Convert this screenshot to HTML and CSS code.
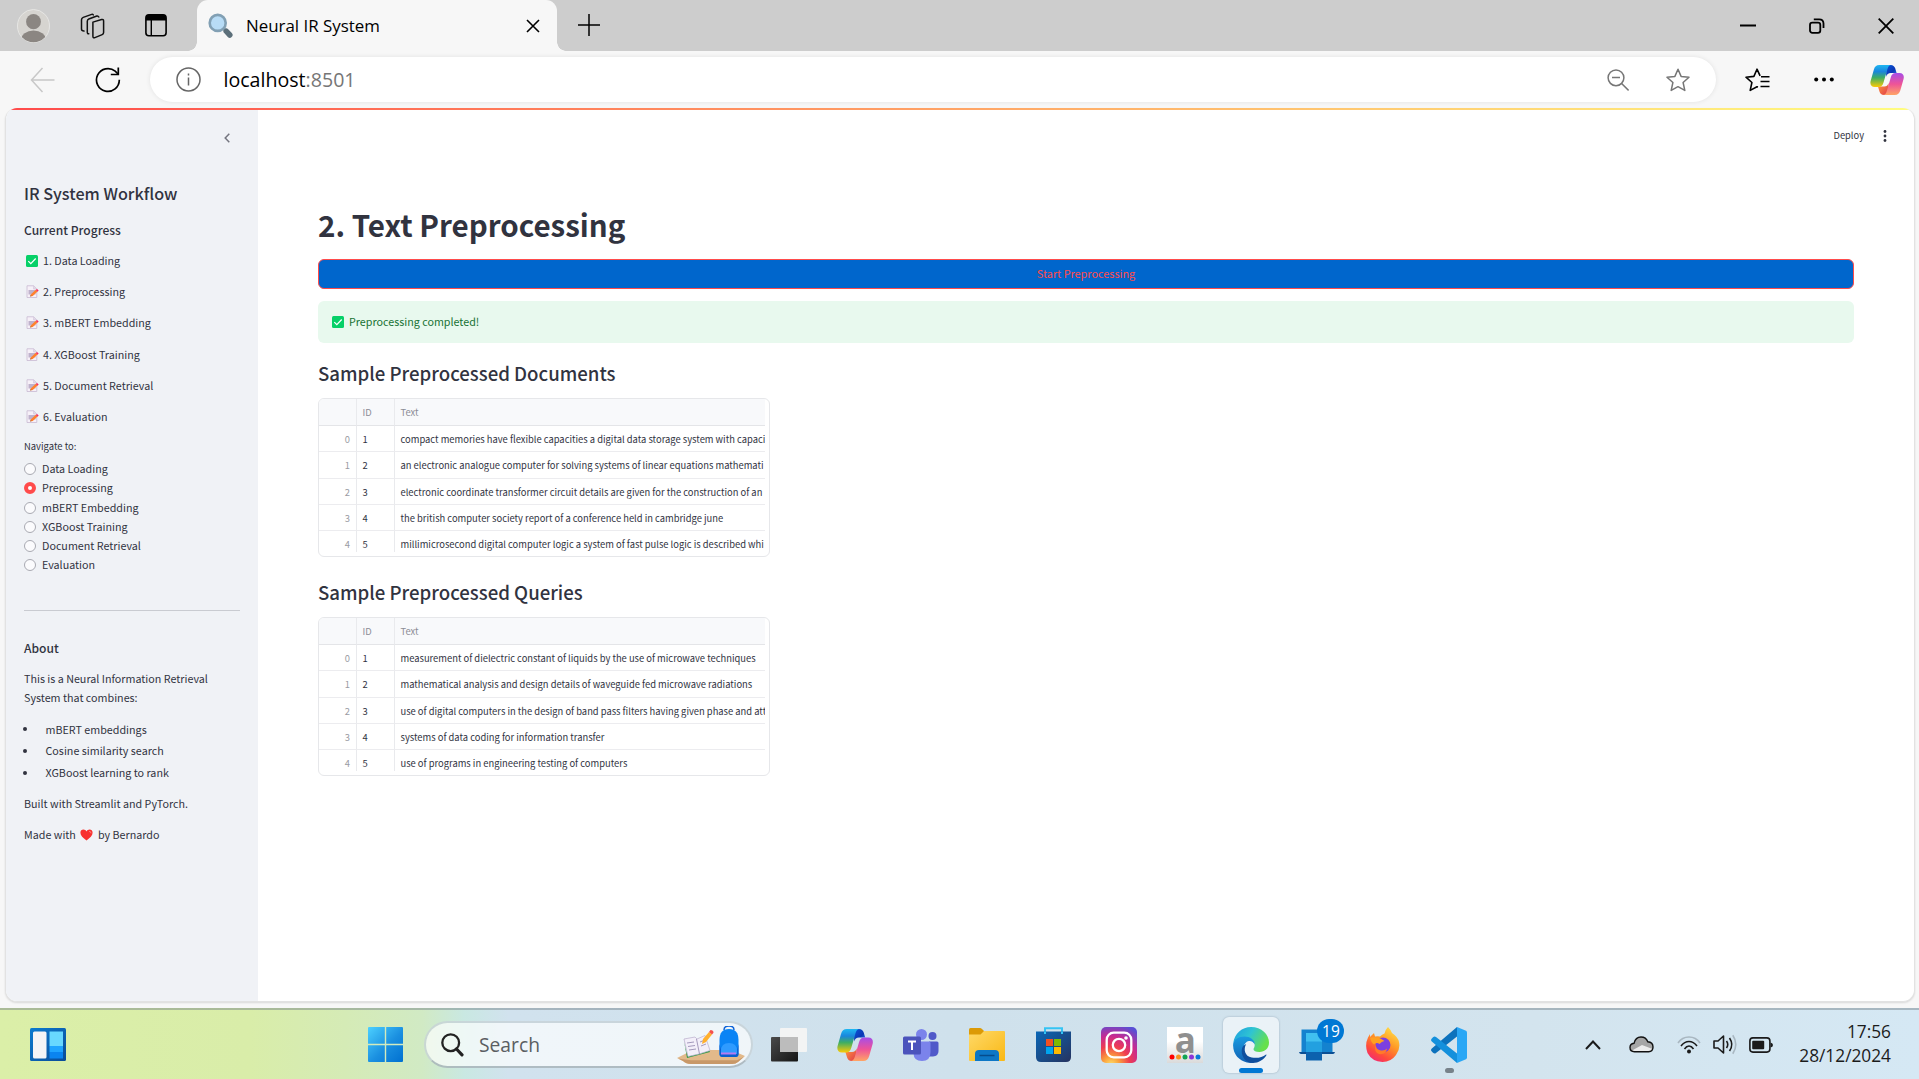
FILE: index.html
```html
<!DOCTYPE html>
<html lang="en">
<head>
<meta charset="utf-8">
<title>Neural IR System</title>
<link rel="stylesheet" href="styles.css">
</head>
<body>
<svg width="0" height="0" class="defs" aria-hidden="true">
  <defs>
    <linearGradient id="cpA" x1="0" y1="0" x2="0" y2="1"><stop offset="0" stop-color="#1eb7f2"/><stop offset=".3" stop-color="#1a86dc"/><stop offset=".58" stop-color="#3fae62"/><stop offset="1" stop-color="#fdca05"/></linearGradient>
    <linearGradient id="cpB" x1="0" y1="0" x2="0" y2="1"><stop offset="0" stop-color="#a64de8"/><stop offset=".5" stop-color="#ee5398"/><stop offset="1" stop-color="#ffa564"/></linearGradient>
    <linearGradient id="cpC" x1="0" y1="0" x2="1" y2="1"><stop offset="0" stop-color="#0a55d8"/><stop offset=".6" stop-color="#0b37b5"/><stop offset="1" stop-color="#2f7ff0"/></linearGradient>
    <linearGradient id="cpD" x1="0" y1="0" x2="1" y2="1"><stop offset="0" stop-color="#ff9a3c"/><stop offset="1" stop-color="#e0394b"/></linearGradient>
    <linearGradient id="win" x1="0" y1="0" x2="1" y2="1"><stop offset="0" stop-color="#4cd0ff"/><stop offset=".55" stop-color="#1a8fe0"/><stop offset="1" stop-color="#0070d0"/></linearGradient>
    <linearGradient id="fold" x1="0" y1="0" x2="1" y2="1"><stop offset="0" stop-color="#ffd968"/><stop offset="1" stop-color="#f9b815"/></linearGradient>
    <linearGradient id="store" x1="0" y1="0" x2="1" y2="1"><stop offset="0" stop-color="#0a66b6"/><stop offset="1" stop-color="#26335f"/></linearGradient>
    <radialGradient id="insta" cx=".28" cy="1.05" r="1.15"><stop offset="0" stop-color="#fddf6a"/><stop offset=".2" stop-color="#fba03c"/><stop offset=".45" stop-color="#ef3d50"/><stop offset=".7" stop-color="#c72a92"/><stop offset="1" stop-color="#5a4fd4"/></radialGradient>
    <linearGradient id="edgeA" x1="0" y1="0" x2="1" y2=".45"><stop offset="0" stop-color="#1b9de2"/><stop offset=".5" stop-color="#2fc4d2"/><stop offset="1" stop-color="#66e04c"/></linearGradient>
    <linearGradient id="edgeB" x1="0" y1="0" x2="0" y2="1"><stop offset="0" stop-color="#1a9be0"/><stop offset="1" stop-color="#1261b4"/></linearGradient>
    <linearGradient id="ffx" x1=".8" y1="0" x2=".2" y2="1"><stop offset="0" stop-color="#ffe14a"/><stop offset=".4" stop-color="#ff9a26"/><stop offset=".75" stop-color="#ff4a3c"/><stop offset="1" stop-color="#f0267a"/></linearGradient>
    <linearGradient id="tv" x1="0" y1="0" x2="1" y2="1"><stop offset="0" stop-color="#4a4a4a"/><stop offset="1" stop-color="#151515"/></linearGradient>
    <linearGradient id="wdg" x1="0" y1="0" x2="1" y2="1"><stop offset="0" stop-color="#0b7bd0"/><stop offset="1" stop-color="#0a4c98"/></linearGradient>
    <symbol id="copilot" viewBox="0 0 36 34">
      <path fill="url(#cpC)" d="M17 1h5c2.500 0 3.900 1.300 4.700 3.600L28.200 9.500H22c-2.600 0-4 1.200-4.900 4z"/>
      <path fill="url(#cpD)" d="M19.500 33h-4.800c-2.600 0-4-1.300-4.700-3.700L8.400 24H15c2.600 0 3.800-1.200 4.700-3.800z"/>
      <path fill="url(#cpA)" d="M9.800 1h13c-2.400.1-3.500 1.500-4.300 4.200l-4.200 14.500c-.9 3-2.200 4.800-5.300 4.800H5C1.200 24.500-.3 21.800.6 18L4 6C5 2.600 6.600 1 9.800 1z"/>
      <path fill="url(#cpB)" d="M26.300 33H13.500c2.400-.1 3.500-1.500 4.300-4.200L22 14.300c.9-3 2.200-4.800 5.300-4.800h4c3.800 0 5.200 2.700 4.300 6.500l-3.400 12c-1 3.400-2.700 5-5.900 5z"/>
    </symbol>
    <symbol id="check" viewBox="0 0 12 12"><rect width="12" height="12" rx="1.500" fill="#06d068"/><path d="M2.300 6.200 4.800 8.700 9.700 3.500" fill="none" stroke="#fff" stroke-width="1.200"/></symbol>
    <symbol id="memo" viewBox="0 0 13 13"><path d="M1 .8h6.800l3 3v8.700H1z" fill="#f6f0f8" stroke="#cdbfd6" stroke-width=".9"/><path d="M7.600.8v3.200h3.200" fill="#e4dcea" stroke="#cdbfd6" stroke-width=".6"/><path d="M2.500 5h7v4.500h-7z" fill="#bfb2cc"/><path d="m4.200 11.600.8-2.400 4.800-4.400 1.700 1.800-4.700 4.300z" fill="#ff822d"/><path d="m9.800 4.900 1.200-1 1.700 1.700-1.200 1.100z" fill="#f92f60"/><path d="m4.200 11.600.5-1.500.9 1z" fill="#7a4a35"/></symbol>
  </defs>
</svg>

<header class="tabs">
  <svg class="avatar" width="33" height="34" viewBox="0 0 33 34"><defs><clipPath id="av"><ellipse cx="16.500" cy="17" rx="15.800" ry="16.300"/></clipPath></defs><ellipse cx="16.500" cy="17" rx="16" ry="16.500" fill="#d6d4d0" stroke="#e6e6e4"/><g clip-path="url(#av)" fill="#8b8682"><ellipse cx="16.500" cy="12.700" rx="7.400" ry="7.600"/><ellipse cx="16.500" cy="31" rx="12.500" ry="9.500"/></g></svg>
  <svg class="spaces" width="26" height="26" viewBox="0 0 26 26" fill="none" stroke="#111" stroke-width="1.500" stroke-linejoin="round" stroke-linecap="round"><path d="m13.500 8.300 8.700-2.600q2-.5 2 1.500v11.600q0 1.500-1.400 2l-7.300 3q-2 .7-2-1.400z" transform="translate(-.6 .8)"/><path d="M9 19.800q-1.500.2-1.500-1.800V7.300q0-1.700 1.500-2.300l8-3q1.300-.4 2 1" transform="translate(-.2 1)"/><path d="M4.500 17.600Q2 17.500 2 15.500V6.300q0-1.800 1.700-2.400l8.500-3q1-.3 1.600.5" transform="translate(-.5 .5)"/></svg>
  <svg class="vtabs" width="22" height="23" viewBox="0 0 22 23"><rect x=".9" y=".9" width="20.200" height="20.800" rx="3" fill="none" stroke="#000" stroke-width="1.600"/><path d="M.9 6.500V4q0-3 3-3h14.200q3 0 3 3v2.500z"/><path d="M6.300 6v16" stroke="#000" stroke-width="1.400"/></svg>
  <div class="tab">
    <svg class="glass" width="25" height="25" viewBox="0 0 25 25"><path d="m14.500 14.500 3 3" stroke="#8a979f" stroke-width="3"/><path d="m18.200 18.200 3.600 3.800" stroke="#5c6f7a" stroke-width="5.500" stroke-linecap="round"/><circle cx="9.700" cy="9.900" r="8" fill="#b8dcf6" stroke="#82a0b4" stroke-width="2.600"/></svg>
    <span class="tab-title">Neural IR System</span>
    <svg width="14" height="14" viewBox="0 0 14 14" stroke="#000" stroke-width="1.600"><path d="m1 1 12 12M13 1 1 13"/></svg>
  </div>
  <svg class="plus" width="22" height="22" viewBox="0 0 22 22" stroke="#000" stroke-width="1.500"><path d="M11 0v22M0 11h22"/></svg>
  <div class="winctl">
    <svg width="16" height="16" viewBox="0 0 16 16"><path d="M0 7.500h16" stroke="#000" stroke-width="2"/></svg>
    <svg width="16" height="16" viewBox="0 0 16 16" fill="none" stroke="#000" stroke-width="1.800"><rect x="1" y="4.600" width="10.300" height="10.300" rx="2.300"/><path d="M4.800 1.300h5.400q4.300 0 4.300 4.300V10"/></svg>
    <svg width="16" height="16" viewBox="0 0 16 16" stroke="#000" stroke-width="1.800"><path d="m.7.7 14.600 14.600M15.300.7.700 15.300"/></svg>
  </div>
</header>

<div class="toolbar">
  <svg class="back" width="25" height="26" viewBox="0 0 25 26" fill="none" stroke="#c8c8c8" stroke-width="1.500"><path d="M24.500 13H1.500M12.500 1 1.500 13l11 12"/></svg>
  <svg class="reload" width="26" height="26" viewBox="0 0 26 26" fill="none" stroke="#000" stroke-width="1.700"><path d="M24.300 12.800A11.400 11.400 0 1 1 20.200 4.200L23 7"/><path d="M23.300.5v7h-7.500"/></svg>
  <div class="address">
    <svg width="25" height="25" viewBox="0 0 25 25" fill="none" stroke="#666" stroke-width="1.500"><circle cx="12.500" cy="12.500" r="11.500"/><path d="M12.500 10.500v8M12.500 6.500v2"/></svg>
    <span class="url">localhost<span class="port">:8501</span></span>
    <svg class="zoomout" width="22" height="22" viewBox="0 0 22 22" fill="none" stroke="#767676" stroke-width="1.500"><circle cx="9" cy="8.800" r="7.900"/><path d="m14.600 14.500 7 7M5 8.600h8"/></svg>
    <svg class="star" width="24" height="24" viewBox="0 0 24 24" fill="none" stroke="#767676" stroke-width="1.500" stroke-linejoin="round"><path d="m12 1.200 3.100 7.200 7.900.8-5.900 5.300 1.700 7.900L12 18.700l-6.800 3.700 1.700-7.900L1 9.200l7.900-.8z"/></svg>
  </div>
  <svg class="favs" width="25" height="24" viewBox="0 0 25 24" fill="none" stroke="#000" stroke-width="1.600" stroke-linejoin="round"><path d="M13 19 12 18.700l-6.800 3.700 1.700-7.900L1 9.200l7.900-.8L12 1.200l3.100 6.600M16 8.700h8.500M15.500 13.500h9M15.500 18.500h9"/></svg>
  <svg class="more" width="20" height="5" viewBox="0 0 20 5"><circle cx="2.200" cy="2.500" r="2"/><circle cx="10" cy="2.500" r="2"/><circle cx="17.800" cy="2.500" r="2"/></svg>
  <svg class="pilot" width="34" height="32"><use href="#copilot"/></svg>
</div>

<div class="window">
<div class="page">
  <div class="rainbow"></div>
  <div class="app">
    <aside class="sidebar">
      <div class="collapse"><svg width="6" height="10" viewBox="0 0 6 10" fill="none" stroke="#74757f" stroke-width="1.500"><path d="M5.300.8 1.200 5l4.100 4.200"/></svg></div>
      <h2>IR System Workflow</h2>
      <h3>Current Progress</h3>
      <ul class="steps">
        <li><svg class="done" width="12" height="12"><use href="#check"/></svg>1. Data Loading</li>
        <li><svg width="13" height="13"><use href="#memo"/></svg>2. Preprocessing</li>
        <li><svg width="13" height="13"><use href="#memo"/></svg>3. mBERT Embedding</li>
        <li><svg width="13" height="13"><use href="#memo"/></svg>4. XGBoost Training</li>
        <li><svg width="13" height="13"><use href="#memo"/></svg>5. Document Retrieval</li>
        <li><svg width="13" height="13"><use href="#memo"/></svg>6. Evaluation</li>
      </ul>
      <div class="navlabel">Navigate to:</div>
      <ul class="radios">
        <li><i></i>Data Loading</li>
        <li><i class="on"></i>Preprocessing</li>
        <li><i></i>mBERT Embedding</li>
        <li><i></i>XGBoost Training</li>
        <li><i></i>Document Retrieval</li>
        <li><i></i>Evaluation</li>
      </ul>
      <hr>
      <h3 class="about">About</h3>
      <p class="intro">This is a Neural Information Retrieval<br>System that combines:</p>
      <ul class="bullets">
        <li>mBERT embeddings</li>
        <li>Cosine similarity search</li>
        <li>XGBoost learning to rank</li>
      </ul>
      <p class="built">Built with Streamlit and PyTorch.</p>
      <p class="made">Made with <svg width="13" height="12" viewBox="0 0 13 12"><path d="M6.500 11.500C3 8.800.4 6.500.4 3.700.4 1.800 1.800.6 3.400.6c1.300 0 2.400.7 3.100 1.800C7.200 1.300 8.300.6 9.600.6c1.600 0 3 1.200 3 3.100 0 2.800-2.600 5.100-6.100 7.800z" fill="#f8312f"/><path d="M9 2.500q2-.4 2 1.800" stroke="#fb7e7c" fill="none"/></svg> by Bernardo</p>
    </aside>
    <main class="main">
      <div class="apphead"><span>Deploy</span><svg width="4" height="12" viewBox="0 0 4 12" fill="#31333f"><circle cx="2" cy="1.500" r="1.400"/><circle cx="2" cy="6" r="1.400"/><circle cx="2" cy="10.500" r="1.400"/></svg></div>
      <h1>2. Text Preprocessing</h1>
      <button class="start">Start Preprocessing</button>
      <div class="alert"><svg width="12" height="12"><use href="#check"/></svg>Preprocessing completed!</div>
      <h2>Sample Preprocessed Documents</h2>
      <div class="frame"><div class="grid">
        <div class="row head"><span></span><span>ID</span><span>Text</span></div>
        <div class="row"><span>0</span><span>1</span><span>compact memories have flexible capacities a digital data storage system with capaci</span></div>
        <div class="row"><span>1</span><span>2</span><span>an electronic analogue computer for solving systems of linear equations mathemati</span></div>
        <div class="row"><span>2</span><span>3</span><span>electronic coordinate transformer circuit details are given for the construction of an</span></div>
        <div class="row"><span>3</span><span>4</span><span>the british computer society report of a conference held in cambridge june</span></div>
        <div class="row"><span>4</span><span>5</span><span>millimicrosecond digital computer logic a system of fast pulse logic is described whi</span></div>
      </div></div>
      <h2 class="second">Sample Preprocessed Queries</h2>
      <div class="frame"><div class="grid">
        <div class="row head"><span></span><span>ID</span><span>Text</span></div>
        <div class="row"><span>0</span><span>1</span><span>measurement of dielectric constant of liquids by the use of microwave techniques</span></div>
        <div class="row"><span>1</span><span>2</span><span>mathematical analysis and design details of waveguide fed microwave radiations</span></div>
        <div class="row"><span>2</span><span>3</span><span>use of digital computers in the design of band pass filters having given phase and att</span></div>
        <div class="row"><span>3</span><span>4</span><span>systems of data coding for information transfer</span></div>
        <div class="row"><span>4</span><span>5</span><span>use of programs in engineering testing of computers</span></div>
      </div></div>
    </main>
  </div>
</div>
</div>

<footer class="taskbar">
  <svg class="widgets" width="36" height="33" viewBox="0 0 36 33"><rect width="36" height="33" rx="1.500" fill="url(#wdg)"/><rect x="3" y="3.500" width="13.500" height="27" rx="1.500" fill="#f4f4f6"/><path d="M19.500 3.500H33V18H19.500z" fill="#68d8ff"/><path d="M19.500 18H33v6H19.500z" fill="#1fa4ff"/><path d="M19.500 24H33v6.500H19.500z" fill="#0a84f0"/></svg>
  <svg class="startbtn" width="35" height="35" viewBox="0 0 35 35"><path d="M1 0h15.800v16.800H0V1q0-1 1-1zM18.200 0H34q1 0 1 1v15.800H18.200zM0 18.200h16.800V35H1q-1 0-1-1zM18.200 18.200H35V34q0 1-1 1H18.200z" fill="url(#win)"/></svg>
  <div class="search">
    <svg width="23" height="24" viewBox="0 0 23 24" fill="none" stroke="#222" stroke-width="2.300"><circle cx="9.700" cy="9.700" r="8.400"/><path d="m15.500 16 5.500 5.800" stroke-width="3.200" stroke-linecap="round"/></svg>
    <span>Search</span>
    <svg class="art" width="68" height="38" viewBox="0 0 68 38"><path d="M0 32 16 24h38l14 6-7 6q-2 2-6 2H14q-5 0-8-3z" fill="#e2b98a"/><path d="m1 32.500 13 1.800h46l7-3.500-6 5.200q-2 2-6 2H14q-5 0-8-3z" fill="#c89868"/><path d="m7 15 3 17 23-6-1.500-3L10 28z" fill="#2e9b45"/><path d="m7 13 11-2 2 2 8-3.500 5 15-11 3.500-11 2.500z" fill="#f3effa" stroke="#b9aecb" stroke-width=".7"/><path d="m19.500 13 3 15M10 17l7-1M11 20.500l7-1M12 24l7-1M23 16l5-2M24 20l5-2" stroke="#9a8fb4" stroke-width=".9"/><path d="m25 18 1-5 6-7 3 2.500-6 7.500z" fill="#ffb02e"/><path d="m32 6 1.500-2q3 0 3 2.800L35 8.500z" fill="#f5504c"/><path d="M47 4q0-4 5-4t5 4" fill="none" stroke="#0d62d8" stroke-width="1.500"/><path d="M42.500 14q0-11 9.500-11t9.500 11v14q0 3-3 3h-13q-3 0-3-3z" fill="#0a84f5"/><path d="M42.500 18v10q0 3 3 3h13q3 0 3-3V18l-2 8q-7-4-15 0z" fill="#0b5fd0"/><path d="M44 25q0-8 8-8t8 8v3H44z" fill="#2f9bff"/><path d="M44 27.500h15" stroke="#b57cf0" stroke-width="2"/></svg>
  </div>
  <div class="apps">
    <div class="slot"><svg width="36" height="34" viewBox="0 0 36 34"><rect y="9" width="27" height="24.500" rx="1" fill="url(#tv)"/><rect x="9" y="0" width="27" height="24" rx="1" fill="#f4f4f4" fill-opacity=".95"/><path d="M9 9h18v15H9z" fill="#bcbcbc"/></svg></div>
    <div class="slot"><svg width="36" height="34"><use href="#copilot"/></svg></div>
    <div class="slot"><svg width="36" height="32" viewBox="0 0 36 32"><circle cx="29.500" cy="7" r="4" fill="#5059c9"/><path d="M26 12.500h8q1.500 0 1.500 1.500v8q0 5-5.500 5.500h-4z" fill="#5059c9"/><circle cx="18.500" cy="5.500" r="5.500" fill="#7b83eb"/><path d="M11 12.500h15q1.500 0 1.500 1.500v9q0 9-8.500 9t-8.500-8z" fill="#7b83eb"/><rect y="7.500" width="18" height="18" rx="1.500" fill="#4b53bc"/><path d="M5 12.500h8M9 12.500V21" stroke="#fff" stroke-width="2"/></svg></div>
    <div class="slot"><svg width="36" height="33" viewBox="0 0 36 33"><path d="M0 1.500Q0 0 1.500 0H11q1 0 2 1l2 2v4H0z" fill="#dc9a06"/><path d="M0 6.500h11.500L15 3h20q1 0 1 1v28q0 1-1 1H1q-1 0-1-1z" fill="url(#fold)"/><path d="M6 33v-7q0-4 4-4h16q4 0 4 4v7z" fill="#0d77c6"/><path d="M10.500 27.500h15" stroke="#064c8c" stroke-width="1.500"/></svg></div>
    <div class="slot"><svg width="35" height="35" viewBox="0 0 35 35"><path d="M9 7V1.200h17V7" fill="none" stroke="#35c4f4" stroke-width="2"/><path d="M0 4.500h35V30q0 5-5 5H5q-5 0-5-5z" fill="url(#store)"/><path d="M9 7V4.500M26 7V4.500" stroke="#35c4f4" stroke-width="2"/><path d="M10 12h7v7h-7z" fill="#f25022"/><path d="M18 12h7v7h-7z" fill="#7fba00"/><path d="M10 20h7v7h-7z" fill="#00a4ef"/><path d="M18 20h7v7h-7z" fill="#ffb900"/></svg></div>
    <div class="slot"><svg width="36" height="36" viewBox="0 0 36 36"><rect width="36" height="36" rx="5" fill="url(#insta)"/><g fill="none" stroke="#fff" stroke-width="2.300"><rect x="5.700" y="5.700" width="24.600" height="24.600" rx="7"/><circle cx="18" cy="18" r="6.200"/></g><circle cx="25" cy="11" r="1.800" fill="#fff"/></svg></div>
    <div class="slot"><div class="amazon"><span>a</span><svg width="32" height="6" viewBox="0 0 32 6"><circle cx="3" cy="3" r="2.500" fill="#f00"/><circle cx="9.500" cy="3" r="2.500" fill="#f79420"/><circle cx="16" cy="3" r="2.500" fill="#12a454"/><circle cx="22.500" cy="3" r="2.500" fill="#8e35d8"/><circle cx="29" cy="3" r="2.500" fill="#0b7ad8"/></svg></div></div>
    <div class="slot active"><div class="tile"><svg width="36" height="36" viewBox="0 0 36 36"><path d="M.3 16C1.500 6.500 9 0 18 0c10.500 0 18 7.500 18 15.500 0 6-4.500 9.500-9.500 9.500-4 0-6-1.500-6-2.800 0-1 1.200-1.600 1.200-4.200 0-4.500-4.500-7.500-10-7.500C6 10.500 1.500 13 .3 16z" fill="url(#edgeA)"/><path d="M.1 18.500C-.3 13 5.500 9.500 11.500 9.500c5.500 0 10.300 3.500 10.300 8-1.600-3-4-3.800-5.800-3.500-3.500.5-6 4.500-5.500 9.500.6 6.500 5.500 11.500 11 12-2.500.6-5 .7-7.500 0C6 33.500.3 27.500.1 18.500z" fill="url(#edgeB)"/><path d="M13.200 17c-3 5-1.500 12.500 5.500 13.500 6 1 11-.5 14-2.800.5-.3 1 .1.700.6C30.500 33 25.500 36 20 36 13 36 8.500 30 8.700 23.500c.1-3.500 2-5.500 4.500-6.500z" fill="#0f4f9e"/></svg></div><b class="ind"></b></div>
    <div class="slot"><div class="phone"><svg width="36" height="33" viewBox="0 0 36 33"><path d="M2.500 1.500h31V24h-31z" fill="#1482cf"/><path d="M0 24h36q-.5 2-2 2H2q-1.500 0-2-2z" fill="#0b4f94"/><path d="M7 5h16v18.500H7z" fill="#40c0f0"/><path d="M7 13.500h16V24H7z" fill="#22a0e0"/><path d="M7 24h16v8.500H7z" fill="#0c62ae"/></svg><span class="badge">19</span></div></div>
    <div class="slot"><svg width="34" height="35" viewBox="0 0 34 35"><path d="M22 0q3 3 4 6 6 4 7 9 1.500 7-3 13-5 7-13.500 7Q6 34.500 1.500 26-1.500 18 2 10.500L4 7v3l4-4 1 3.500q3-.5 5 0 2-2 4.500-3Q19 3 22 0z" fill="url(#ffx)"/><circle cx="17" cy="18" r="7.500" fill="#7b3fe0"/><path d="M4 10.500q6-1 10.500 1l4 2.500q-3 .5-5 3-3-2-5.500.5-3-2-4-7z" fill="#ffa020"/><path d="M9.500 17q0 5.500 5.500 6.500 4 .5 6-2-1 6.500-8 5.500-5.500-2-3.500-10z" fill="#ff7a2a"/></svg></div>
    <div class="slot vs"><svg width="36" height="36" viewBox="0 0 36 36"><path d="M26 0v9.500L5 26q-1.500 1.200-3-.3L.6 24.200q-1.200-1.500.2-2.700z" fill="#0c72bd"/><path d="M26 36v-9.500L5 10q-1.500-1.200-3 .3L.6 11.800q-1.200 1.500.2 2.700z" fill="#1490dc"/><path d="m26 0 9 3.700q1 .5 1 1.700v25.200q0 1.200-1 1.700L26 36z" fill="#2aa7f5"/></svg><b class="ind"></b></div>
  </div>
  <div class="tray">
    <svg class="t1" width="16" height="10" viewBox="0 0 16 10" fill="none" stroke="#1b1b1b" stroke-width="2"><path d="m1 9 7-7.500L15 9"/></svg>
    <svg class="t2" width="25" height="17" viewBox="0 0 25 17"><path d="M5.500 15.800q-4.500-.2-4.500-4.300 0-3.700 4-4.200Q6.500 1 12 1q5 0 6.800 4.800Q24 6.200 24 11q0 4.500-4.500 4.800z" fill="#a6a6a6"/><path d="m3 14.500 10-5.500 10.500 4q-1 2.800-4 2.800h-14z" fill="#ececec"/><path d="M5.500 15.800q-4.500-.2-4.500-4.300 0-3.700 4-4.200Q6.500 1 12 1q5 0 6.800 4.800Q24 6.200 24 11q0 4.500-4.500 4.800z" fill="none" stroke="#111" stroke-width="1.400"/></svg>
    <svg class="t3" width="24" height="18" viewBox="0 0 24 18" fill="none" stroke-width="1.600"><path d="M1 7Q5 1 12 1t11 6" stroke="#a9b7c1"/><path d="M4 10q3.500-4.500 8-4.500t8 4.500M7.500 13q2-3 4.500-3t4.500 3" stroke="#1b1b1b"/><circle cx="12" cy="15.500" r="2" fill="#1b1b1b"/></svg>
    <svg class="t4" width="24" height="21" viewBox="0 0 24 21" fill="none" stroke="#1b1b1b" stroke-width="1.600" stroke-linejoin="round"><path d="M1 7h4l5.500-5v17L5 14H1z"/><path d="M13.500 7q2.500 3.500 0 7M16.500 4q4.500 6.500 0 13"/><path d="M19.800 1.300q6 9 0 18.400" stroke="#a9b7c1"/></svg>
    <svg class="t5" width="24" height="16" viewBox="0 0 24 16"><rect x=".9" y=".9" width="20" height="14.200" rx="3" fill="none" stroke="#1b1b1b" stroke-width="1.600"/><rect x="3.200" y="3.700" width="12" height="8.600" rx="1" fill="#1b1b1b"/><path d="M21.500 5.500q2.500.5 2.500 2.500t-2.500 2.500z" fill="#1b1b1b"/></svg>
    <div class="clock"><div>17:56</div><div>28/12/2024</div></div>
  </div>
</footer>
</body>
</html>
```
FILE: styles.css
```css
* { box-sizing: border-box; }
html, body { height: 100%; }
body { margin: 0; display: flex; flex-direction: column; overflow: hidden; background: #f7f7f7; font-family: "Open Sans", "Noto Sans", sans-serif; color: #000; }
h1, h2, h3, p, ul { margin: 0; padding: 0; }
ul { list-style: none; }
svg { display: block; flex: none; }
.defs { position: absolute; }

/* browser tabs */
.tabs { height: 51px; background: #cdcdcd; display: flex; align-items: center; flex: none; padding-left: 17px; }
.spaces { margin-left: 30px; }
.vtabs { margin-left: 39px; }
.tab { width: 360px; height: 51px; margin-left: 30px; background: #f7f7f7; border-radius: 11px 11px 0 0; display: flex; align-items: center; padding: 0 17px 0 11px; position: relative; }
.tab::before, .tab::after { content: ""; position: absolute; bottom: 0; width: 9px; height: 9px; }
.tab::before { left: -9px; background: radial-gradient(circle at 0 0, transparent 8.500px, #f7f7f7 9px); }
.tab::after { right: -9px; background: radial-gradient(circle at 100% 0, transparent 8.500px, #f7f7f7 9px); }
.tab-title { flex: 1; font-size: 16.900px; margin-left: 13px; }
.plus { margin: 0 0 2px 21px; }
.winctl { display: flex; gap: 53px; margin: 0 25px 0 auto; }

/* address row */
.toolbar { height: 57px; flex: none; display: flex; align-items: center; padding-left: 30px; }
.reload { margin-left: 40px; }
.address { width: 1566px; height: 45px; margin-left: 29px; background: #fff; border-radius: 23px; box-shadow: 0 0 5px rgba(0, 0, 0, .09); display: flex; align-items: center; padding: 0 26px 0 26px; }
.url { font-size: 19.600px; margin-left: 22.500px; flex: 1; }
.port { color: #767676; }
.zoomout { margin-right: 37px; }
.favs { margin-left: 29px; }
.more { margin-left: 44px; }
.pilot { margin-left: 36px; }

/* page */
.window { flex: 1; padding: 0 4px 6px 5px; }
.page { height: 894px; border: solid #e2e2e2; border-width: 0 1px 1px; border-radius: 12px; background: #fff; overflow: hidden; box-shadow: 0 1px 2px rgba(0, 0, 0, .12); display: flex; flex-direction: column; }
.rainbow { height: 2px; flex: none; background: linear-gradient(90deg, #ff4b4b, #fffd80); }
.app { flex: 1; display: flex; font-family: "Noto Sans CJK SC", "Noto Sans", sans-serif; color: #31333f; font-size: 10.740px; line-height: 19.200px; }
.sidebar { width: 252px; background: #f0f2f6; padding: 0 18px 0 18px; }
.collapse { height: 56px; display: flex; justify-content: flex-end; align-items: center; padding-right: 10px; }
.sidebar h2 { font-size: 16.180px; font-weight: 500; line-height: 54px; height: 53px; }
.sidebar h3 { font-size: 12.050px; font-weight: 500; line-height: 22px; height: 24px; }
.steps { margin-top: 2px; }
.steps li { height: 31.200px; display: flex; align-items: center; gap: 4px; padding-left: 2px; }
.steps .done { margin-right: 1px; }
.navlabel { font-size: 9.440px; height: 28px; line-height: 28px; }
.radios li { height: 19.200px; line-height: 18px; display: flex; align-items: flex-start; gap: 6px; }
.radios i { width: 12px; height: 12px; border: 1px solid #a9aab2; border-radius: 50%; background: #fbfbfd; margin-top: 3px; }
.radios .on { border: 4px solid #ff4b4b; background: #fff; }
.sidebar hr { margin: 34.400px 0 0; border: 0; height: 1px; background: #c9cbd1; }
.sidebar .about { margin-top: 26px; }
.intro { margin-top: 8.500px; white-space: nowrap; }
.bullets { margin-top: 11px; }
.bullets li { height: 21.600px; display: flex; align-items: center; gap: 18.500px; margin-left: -1px; }
.bullets li::before { content: ""; width: 4px; height: 4px; border-radius: 50%; background: #31333f; }
.built { margin-top: 10.700px; }
.made { margin-top: 12px; display: flex; align-items: center; gap: 4.500px; }

.main { flex: 1; padding: 0 60px 0 60px; }
.apphead { height: 51px; display: flex; justify-content: flex-end; align-items: center; gap: 19px; font-size: 9.330px; margin-right: -33px; }
.main h1 { font-size: 29.550px; font-weight: 700; line-height: 46px; height: 46px; margin-top: 41px; }
.start { display: block; width: 100%; height: 30px; margin-top: 11px; padding: 0 0 2px; border: 1px solid #ff4b4b; border-radius: 6px; background: #0066cc; color: #ff4b4b; font: 10.860px/26px "Noto Sans CJK SC", sans-serif; }
.alert { margin-top: 12px; height: 42px; border-radius: 6px; background: #e8f9ee; color: #177233; display: flex; align-items: center; gap: 5px; padding-left: 14px; }
.main h2 { font-size: 18.620px; font-weight: 500; line-height: 36px; height: 36px; margin-top: 12px; }
.main .second { margin-top: 17px; }
.frame { width: 452px; height: 159px; margin-top: 7px; border: 1px solid #e6e7ea; border-radius: 6px; overflow: hidden; }
.grid { width: 446px; height: 153px; overflow: hidden; font-size: 9.390px; }
.row { display: grid; grid-template-columns: 38px 38px 370px; height: 26.250px; line-height: 26.700px; }
.row span { border-right: 1px solid #e9eaed; border-bottom: 1px solid #ececef; padding-left: 5.500px; white-space: nowrap; overflow: hidden; }
.row span:first-child { text-align: right; padding: 0 6px 0 0; color: #9a9ba3; }
.row span:last-child { border-right: 0; }
.row.head { height: 27px; line-height: 27.500px; background: #f8f9fb; color: #8c8d96; }
.row.head span { border-bottom-color: #e4e5e8; }

/* taskbar */
.taskbar { height: 71px; flex: none; display: flex; align-items: center; border-top: 2px solid rgba(110, 125, 130, .45); background: linear-gradient(90deg, #dbefa8 0, #d9eda9 13%, #d5ebb6 18%, #d1eac4 22%, #c9e8e2 24.200%, #d1e2ee 26.500%, #cfe1ec 50%, #d3e4ee 80%, #d5e8f4 100%) border-box; padding: 0 28px 0 30px; }
.widgets { margin-top: -1px; }
.startbtn { margin-left: 302px; }
.search { width: 329px; height: 47px; margin-left: 20.500px; border-radius: 24px; background: rgba(255, 255, 255, .68); border: 2px solid rgba(130, 155, 165, .35); border-bottom-color: rgba(110, 130, 140, .5); display: flex; align-items: center; padding: 0 6px 0 15px; }
.search span { font-size: 19.260px; color: #5b5e62; margin-left: 15.500px; flex: 1; }
.apps { display: flex; margin-left: 3.500px; height: 69px; }
.slot { width: 66.050px; display: flex; align-items: center; justify-content: center; position: relative; }
.amazon { width: 36px; height: 36px; background: linear-gradient(#fff 40%, #dadada); display: flex; flex-direction: column; align-items: center; }
.amazon span { font: bold 35px/24px "Open Sans", sans-serif; color: #8f8f8f; height: 26px; margin-top: 1px; }
.tile { width: 56px; height: 56px; border-radius: 6px; background: rgba(255, 255, 255, .55); box-shadow: 0 0 2px rgba(90, 110, 130, .5); display: flex; align-items: center; justify-content: center; }
.ind { position: absolute; bottom: 6px; height: 5px; width: 24px; border-radius: 3px; background: #0078d4; }
.vs .ind { width: 9px; background: #77828a; }
.phone { position: relative; }
.badge { position: absolute; left: 18px; top: -9px; width: 27px; height: 24px; border-radius: 12px; background: #0078d4; color: #fff; font-size: 15.500px; line-height: 24px; text-align: center; }
.tray { display: flex; align-items: center; margin-left: auto; }
.t2 { margin-left: 28px; }
.t3 { margin-left: 23px; }
.t4 { margin-left: 12px; }
.t5 { margin-left: 12px; }
.clock { width: 118px; text-align: right; font-size: 17.300px; line-height: 24px; color: #1b1b1b; margin-top: -1px; }
```
